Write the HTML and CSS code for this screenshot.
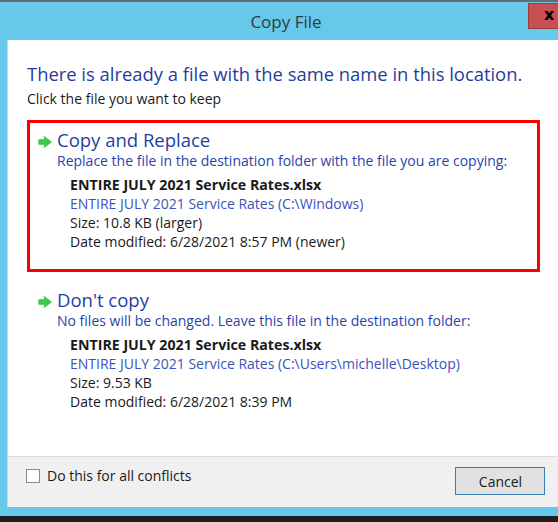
FILE: index.html
```html
<!DOCTYPE html>
<html>
<head>
<meta charset="utf-8">
<link rel="stylesheet" href="styles.css">
</head>
<body>
<div class="window">
  <div class="titlebar">
    <div class="title">Copy File</div>
    <div class="close">x</div>
  </div>
  <div class="client">
    <div class="content">
      <div class="main">There is already a file with the same name in this location.</div>
      <div class="sub">Click the file you want to keep</div>

      <div class="option selected">
        <div class="opt-head">
          <svg class="arrow" width="14" height="12" viewBox="0 0 14 12"><path d="M0.6 3.6 H6.2 V0.3 L13.6 6 L6.2 11.7 V8.4 H0.6 Z" fill="#3dc84b" stroke="#3dc84b" stroke-width="0.6" stroke-linejoin="round"/></svg>
          <span>Copy and Replace</span>
        </div>
        <div class="opt-desc">Replace the file in the destination folder with the file you are copying:</div>
        <div class="details">
          <div class="fname">ENTIRE JULY 2021 Service Rates.xlsx</div>
          <div class="fpath">ENTIRE JULY 2021 Service Rates (C:\Windows)</div>
          <div>Size: 10.8 KB (larger)</div>
          <div>Date modified: 6/28/2021 8:57 PM (newer)</div>
        </div>
      </div>

      <div class="option">
        <div class="opt-head">
          <svg class="arrow" width="14" height="12" viewBox="0 0 14 12"><path d="M0.6 3.6 H6.2 V0.3 L13.6 6 L6.2 11.7 V8.4 H0.6 Z" fill="#3dc84b" stroke="#3dc84b" stroke-width="0.6" stroke-linejoin="round"/></svg>
          <span>Don't copy</span>
        </div>
        <div class="opt-desc">No files will be changed. Leave this file in the destination folder:</div>
        <div class="details">
          <div class="fname">ENTIRE JULY 2021 Service Rates.xlsx</div>
          <div class="fpath">ENTIRE JULY 2021 Service Rates (C:\Users\michelle\Desktop)</div>
          <div>Size: 9.53 KB</div>
          <div>Date modified: 6/28/2021 8:39 PM</div>
        </div>
      </div>
    </div>
    <div class="footer">
      <label class="check"><span class="box"></span><span>Do this for all conflicts</span></label>
      <button class="btn">Cancel</button>
    </div>
  </div>
</div>
</body>
</html>
```
FILE: styles.css
```css
html, body {
  margin: 0;
  padding: 0;
  background: #1e1e1e;
  height: 522px;
  overflow: hidden;
}
.window {
  width: 558px;
  height: 516px;
  background: #66c9ea;
  border-top: 2px solid #6a6a6a;
  padding-left: 7px;
  box-sizing: border-box;
  display: flex;
  flex-direction: column;
  font-family: "Open Sans", "Noto Sans", sans-serif;
  color: #1a1a1a;
  overflow: hidden;
}
.titlebar {
  height: 38px;
  position: relative;
  display: flex;
  justify-content: center;
  align-items: center;
}
.title {
  font-size: 17px;
  color: #2f3a40;
  margin-left: 7px;
  margin-top: 1px;
}
.close {
  position: absolute;
  left: 521px;
  top: 1px;
  width: 30px;
  height: 26px;
  background: #c75050;
  border: 1px solid #9b3c3c;
  border-right: none;
  box-sizing: border-box;
  color: #000;
  font-family: "DejaVu Sans", sans-serif;
  font-weight: bold;
  font-size: 16px;
  line-height: 22px;
  padding-left: 15px;
}
.client {
  flex: 1;
  background: #fff;
  border-left: 1px solid #b9dff0;
  margin-bottom: 9px;
  display: flex;
  flex-direction: column;
}
.content {
  flex: 1;
  padding: 22px 0 0 19px;
}
.main {
  font-size: 18.4px;
  line-height: 24px;
  color: #1f3d9c;
}
.sub {
  font-size: 14px;
  line-height: 18px;
  margin-top: 4px;
}
.option {
  width: 513px;
  height: 152px;
  box-sizing: border-box;
  border: 3px solid transparent;
  padding: 6px 0 0 6px;
  margin-top: 12px;
}
.option + .option {
  margin-top: 8px;
}
.option.selected {
  border-color: #f00;
}
.opt-head {
  display: flex;
  align-items: center;
  font-size: 18.5px;
  line-height: 22px;
  color: #1f3fa3;
}
.arrow {
  margin-left: 2px;
  margin-right: 5px;
  margin-top: 4px;
}
.opt-desc {
  font-size: 14px;
  line-height: 20px;
  color: #2a43a8;
  padding-left: 21px;
}
.details {
  font-size: 14px;
  line-height: 19px;
  padding-left: 34px;
  margin-top: 4px;
  color: #1a1a1a;
}
.fname {
  font-weight: bold;
  font-size: 14.2px;
}
.fpath {
  color: #3b51be;
}
.footer {
  height: 51px;
  background: #f0f0f0;
  border-top: 1px solid #dcdcdc;
  box-sizing: border-box;
  display: flex;
  align-items: flex-start;
  padding-left: 18px;
}
.check {
  display: flex;
  align-items: center;
  margin-top: 9px;
  font-size: 14px;
  color: #1a1a1a;
}
.box {
  width: 14px;
  height: 14px;
  border: 1px solid #8a8a8a;
  background: #fff;
  box-sizing: border-box;
  margin-right: 7px;
}
.btn {
  margin-left: 264px;
  margin-top: 10px;
  width: 90px;
  height: 28px;
  background: #e1e1e1;
  border: 1px solid #3c7fb1;
  font-family: "Open Sans", "Noto Sans", sans-serif;
  font-size: 14px;
  color: #1a1a1a;
  padding: 0;
  flex-shrink: 0;
}
```
